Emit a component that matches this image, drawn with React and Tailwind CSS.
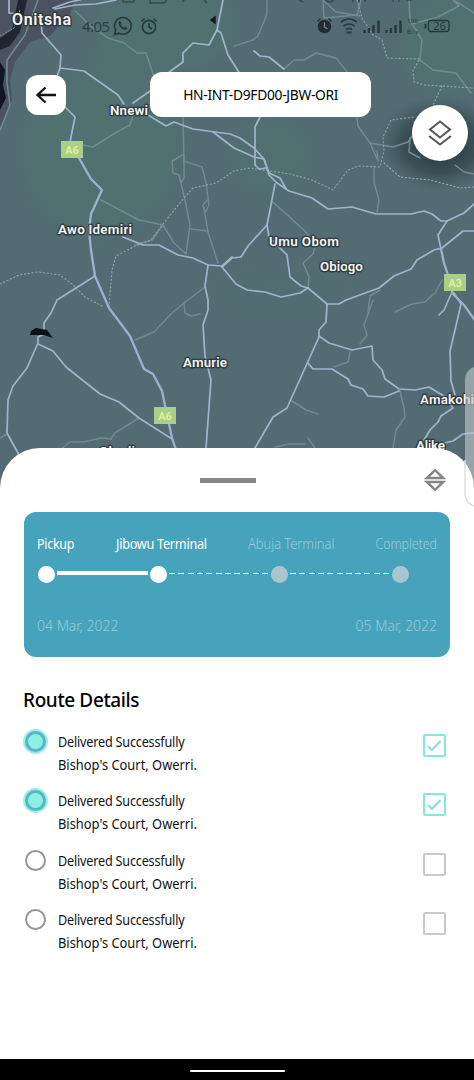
import React from "react";

const majorRoads = [
  "9,0 9,13 20,14",
  "41,20 42,33 61,55 60,68 57,76",
  "65,107 75,117 70,142",
  "55,9 75,5 96,4 116,0",
  "53,8 70,2 88,-2",
  "60,68 84,71 118,95 124,104",
  "223,0 217,30 209,45 193,43 183,53 183,62 168,73 150,91 133,103",
  "217,30 221,33 228,55 240,74",
  "148,115 166,126 174,122 193,129 230,134 240,138 254,148 264,159",
  "213,132 234,148 254,157 264,159 269,175 277,183 289,191 312,198 328,209 352,207 376,214 411,214 424,211 432,214 441,221 447,221 464,213 474,204",
  "260,117 255,127 255,165 259,169 266,168",
  "264,159 269,173 280,178 286,189",
  "254,51 260,56 269,57 284,69",
  "275,184 267,225 248,246 241,257 232,258 222,267",
  "267,225 269,237 287,255 290,277 301,286 308,288 327,304 339,304 346,300 379,288 394,276 411,269 417,260 434,250 442,248 463,231 474,231",
  "308,288 300,293 281,297 265,292 247,290 236,284 222,267",
  "123,237 143,245 159,245 178,255 193,258 208,265 222,266 232,257",
  "208,265 205,286 208,300 208,310 203,325 205,356 211,380 206,448",
  "327,304 326,322 319,330 319,337 287,408 273,417 255,448",
  "319,336 329,343 352,350 372,346 373,360 382,370 385,379 399,389 415,390 429,387 444,396 453,408 441,416 438,422 430,430 424,440",
  "308,363 313,369 332,369 348,379 351,385 363,389 368,396 384,397 399,391",
  "447,221 438,235 441,249",
  "452,292 444,310 439,315",
  "454,293 461,304 455,330 450,351 451,381 455,395",
  "95,276 57,300 51,313 44,323 44,334 38,337 38,343 27,368 13,386 8,400 7,433 19,455",
  "38,344 53,351 66,367 100,394 119,402 139,418 172,439",
  "474,433 463,434 453,441 440,444",
];

const trunkRoads = [
  "79,158 91,179 102,190 91,214 89,230 91,250 95,276 109,308 130,336 144,369 153,374 162,391 166,410 172,438 176,450",
  "441,249 444,263 448,275 453,294 464,305 474,319",
];

const minorRoads = [
  "75,11 92,27 108,38 124,43 137,53 146,53 154,77",
  "38,0 25,35 7,60 7,83 10,105 0,130",
  "133,115 130,125 115,133 93,147 74,143",
  "183,117 184,163",
  "172,161 184,154 184,178 181,183 179,175 173,173 172,161",
  "179,175 185,200 190,225 186,254 174,243 163,225 139,220 101,200",
  "184,161 202,167 206,183 209,205 205,213 203,205 207,200",
  "204,208 208,232 218,263",
  "190,229 208,231",
  "163,225 152,240 135,245",
  "205,287 184,303 171,314 154,332 135,340",
  "184,303 185,313 191,316 200,314",
  "267,0 267,14 258,36 253,40 234,46",
  "323,0 324,18 357,15 361,0",
  "323,0 336,12 360,16",
  "409,0 410,20 422,40 420,60 433,70 456,73 471,93",
  "474,13 462,5 453,0 459,6 438,17 412,24",
  "284,69 294,60 304,60 316,53 336,58 348,73",
  "357,117 358,126 370,143 378,161 377,151",
  "374,166 374,182 379,200 377,212",
  "370,143 393,147 408,142 412,136",
  "273,202 306,232 315,247 313,254 303,263 309,277 308,288",
  "373,300 364,325 367,335 360,344",
  "350,352 348,362 334,367",
  "368,312 370,296 380,290",
  "395,312 412,304 425,302 435,293 442,280",
  "292,401 306,410 318,414",
  "400,391 404,408 405,417 396,430 393,448",
  "139,418 115,433 111,439",
  "111,439 101,438 84,442 70,442 60,450",
  "0,438 7,434",
  "275,447 289,444 305,444",
  "315,448 308,438",
  "410,138 409,152 420,158",
  "474,174 464,172 455,165",
];

const dottedRoads = [
  "0,284 19,275 38,272 60,275 72,284 85,297 102,306",
  "109,307 112,270 116,256 135,246 151,240 163,224 184,198 193,188 216,183 234,171 250,168 290,174 312,180 333,190 348,170 358,166 380,167 384,150 383,137 391,120 414,117",
  "384,163 400,177 430,180 460,188 474,187",
  "357,0 362,18 372,34 382,40 387,58 420,59 413,70 414,82 425,85 474,88",
  "442,86 433,105",
];

const places = [
  { name: "Onitsha", x: 12, y: 25, w: 59, size: 16 },
  { name: "Nnewi", x: 110, y: 115, w: 38, size: 13.5 },
  { name: "Awo Idemiri", x: 58, y: 234, w: 74, size: 13.5 },
  { name: "Umu Obom", x: 269, y: 246, w: 70, size: 13.5 },
  { name: "Obiogo", x: 320, y: 271, w: 43, size: 13.5 },
  { name: "Amurie", x: 183, y: 367, w: 44, size: 13.5 },
  { name: "Amakohi", x: 420, y: 404, w: 54, size: 13.5 },
  { name: "Alike", x: 416, y: 450, w: 29, size: 13.5 },
  { name: "Obodi", x: 99, y: 456, w: 36, size: 13.5 },
];

const shields = [
  { label: "A6", x: 61, y: 141 },
  { label: "A6", x: 154, y: 407 },
  { label: "A3", x: 444, y: 274 },
];

function Lines({ items, ...props }) {
  return (
    <g fill="none" strokeLinejoin="round" strokeLinecap="round" {...props}>
      {items.map((points, i) => (
        <polyline key={i} points={points} />
      ))}
    </g>
  );
}

function MapView() {
  return (
    <svg className="absolute inset-0" width="474" height="520" viewBox="0 0 474 520">
      <defs>
        <radialGradient id="green">
          <stop offset="0" stopColor="#4f756f" stopOpacity="0.75" />
          <stop offset="0.6" stopColor="#4f756f" stopOpacity="0.5" />
          <stop offset="1" stopColor="#4f756f" stopOpacity="0" />
        </radialGradient>
        <radialGradient id="shade">
          <stop offset="0" stopColor="#1f3238" stopOpacity="0.95" />
          <stop offset="0.6" stopColor="#2c4046" stopOpacity="0.65" />
          <stop offset="1" stopColor="#3d5358" stopOpacity="0" />
        </radialGradient>
      </defs>
      <rect width="474" height="520" fill="#536b73" />
      <ellipse cx="100" cy="150" rx="100" ry="110" fill="url(#green)" />
      <ellipse cx="165" cy="25" rx="90" ry="60" fill="url(#green)" />
      <ellipse cx="445" cy="45" rx="60" ry="60" fill="url(#green)" />
      <ellipse cx="270" cy="155" rx="60" ry="60" fill="url(#green)" opacity="0.6" />
      <ellipse cx="280" cy="290" rx="110" ry="40" fill="url(#green)" opacity="0.35" />
      <path d="M0 0H75L70 14L50 36L30 42L15 62L10 80L12 100L0 128Z" fill="#4b5260" />
      <path d="M18 0H27L20 32L10 46L0 50V38L12 30Z" fill="#202631" />
      <path d="M0 62L5 70L3 85L6 98L0 110Z" fill="#101722" />
      <path d="M0 36L14 28L20 10" fill="none" stroke="#8e98a6" strokeWidth="1" strokeDasharray="2 1" />
      <ellipse cx="440" cy="144" rx="62" ry="48" fill="url(#shade)" />
      <Lines items={minorRoads} stroke="#728b92" strokeWidth="1.5" />
      <Lines items={dottedRoads} stroke="#8ca2a3" strokeWidth="1.2" strokeDasharray="1.2 2.6" />
      <Lines items={majorRoads} stroke="#a2b4cc" strokeWidth="1.7" />
      <Lines items={trunkRoads} stroke="#a0afd2" strokeWidth="2.3" />
      <path d="M31 331L36 328L47 330L53 338L44 335L30 335Z" fill="#0c1114" />
      <path d="M211 20L215 17V23Z" fill="#15191c" stroke="#15191c" strokeWidth="1.5" />
      {shields.map((s) => (
        <g key={s.y}>
          <rect x={s.x} y={s.y} width="22" height="17" fill="#a9cf88" />
          <text x={s.x + 11} y={s.y + 13} textAnchor="middle" fontSize="11" fontWeight="700" fill="#e0ee9a" fontFamily="Roboto, sans-serif">
            {s.label}
          </text>
        </g>
      ))}
      <g fontFamily="Roboto, sans-serif" fontWeight="600" fill="#f4f6f6" stroke="#283238" strokeWidth="3" strokeOpacity="0.75" strokeLinejoin="round" paintOrder="stroke">
        {places.map((p) => (
          <text key={p.name} x={p.x} y={p.y} fontSize={p.size} textLength={p.w}>
            {p.name}
          </text>
        ))}
      </g>
    </svg>
  );
}

function StatusBar() {
  return (
    <svg className="absolute inset-x-0 top-0" width="474" height="44" viewBox="0 0 474 44" fill="none" stroke="#26383e" strokeWidth="1.6">
      <g stroke="#2a3a40" strokeOpacity="0.7">
        <path d="M123 0v2h11v-2M150 0v3h14l3-3M182 2l4-4M204 0l3 3M299 0l4 2M325 0q5 4 9 0M353 0v2M359 0v2M365 0v2M393 0v2M399 0v2M407 0h5" />
      </g>
      <text x="82" y="32" textLength="28" fontSize="15" fontWeight="400" fill="#2b3e45" stroke="none" fontFamily="'Noto Sans', sans-serif">4:05</text>
      <path d="M114.500 34.500l1.300-4.300a8.300 8.300 0 1 1 3.200 3z" />
      <path d="M119 21.500c1-1 2 0 2.300 1.600l-.8 1.300c.8 1.600 2 2.600 3.600 3.300l1.300-1c1.500.5 2.600 1.300 1.500 2.400-3.400 3-10-4-7.900-7.600z" fill="#26383e" stroke="none" />
      <circle cx="149" cy="27" r="6.600" />
      <path d="M149 23v4l3 2M141.500 21.500l3-3M156.500 21.500l-3-3" />
      <circle cx="324.500" cy="26.500" r="6.800" fill="#202e34" stroke="none" />
      <path d="M317.500 21.500l3-3M331.500 21.500l-3-3" />
      <path d="M324.500 22.500v4.500l3 2" stroke="#788d92" strokeWidth="1.200" />
      <path d="M341 22q8-6 16 0M343.500 26q5.500-4 11 0M346 29.500q3-2 6 0" />
      <path d="M346.500 32.500h5" strokeWidth="2" />
      <path d="M364.500 33v-3M369 33v-5M373.500 33v-8M378.500 33V20.500M386.500 33v-3M391 33v-5M395.500 33v-8M400.500 33V20.500" strokeWidth="2.400" />
      <text x="407" y="23" textLength="11" fontSize="6" fill="#26383e" stroke="none" fontFamily="'Noto Sans', sans-serif">100</text>
      <text x="407" y="34" textLength="11" fontSize="6" fill="#26383e" stroke="none" fontFamily="'Noto Sans', sans-serif">B/s</text>
      <path d="M425.500 24v4.500" strokeWidth="1.800" />
      <rect x="428.500" y="20.500" width="20.500" height="11" rx="2.500" strokeWidth="1.300" />
      <text x="433" y="30" textLength="13" lengthAdjust="spacingAndGlyphs" fontSize="10" fill="#26383e" stroke="none" fontFamily="'Noto Sans', sans-serif">26</text>
    </svg>
  );
}

function Stop({ state }) {
  return <span className={`size-[17px] shrink-0 rounded-full ${state === "done" ? "bg-white" : "bg-[#a9c6cc]"}`} />;
}

function TripCard() {
  return (
    <section className="mx-6 mt-[22px] h-[145px] w-[426px] rounded-xl bg-[#46a3bb] px-[13px] pt-[22px] text-[14px] leading-5 text-[#9acbd7]">
      <div className="flex justify-between whitespace-nowrap">
        <span className="w-[79px] text-white"><span className="inline-block origin-left scale-x-[0.89] tracking-[-0.3px]">Pickup</span></span>
        <span className="w-[132px] text-white"><span className="inline-block origin-left scale-x-[0.905] tracking-[-0.3px]">Jibowu Terminal</span></span>
        <span className="w-[128px]"><span className="inline-block origin-left scale-x-[0.93] font-light tracking-[-0.1px]">Abuja Terminal</span></span>
        <span className="flex w-[61px] justify-end"><span className="inline-block origin-right scale-x-[0.89] font-light tracking-[-0.1px]">Completed</span></span>
      </div>
      <div className="mt-[12px] flex items-center pl-[1px]">
        <Stop state="done" />
        <span className="mx-[2px] mb-[3px] h-1 w-[91px] bg-white" />
        <Stop state="done" />
        <span className="mx-[2px] mb-[3px] h-px w-[100px] bg-[repeating-linear-gradient(90deg,#fff_0px,#fff_6px,transparent_6px,transparent_9.300px)]" />
        <Stop />
        <span className="mx-[2px] mb-[3px] h-px w-[100px] bg-[repeating-linear-gradient(90deg,#fff_0px,#fff_6px,transparent_6px,transparent_9.300px)]" />
        <Stop />
      </div>
      <div className="mt-[33px] flex justify-between font-light">
        <span>04 Mar, 2022</span>
        <span>05 Mar, 2022</span>
      </div>
    </section>
  );
}

function RouteItem({ done }) {
  return (
    <li className="flex h-[59.300px]">
      <span
        className={
          done
            ? "mt-px size-[21px] rounded-full border-[3px] border-[#55b8c4] bg-[#8eefe5] shadow-[0_0_1px_2px_#9cebe8]"
            : "mt-px size-[21px] rounded-full border-2 border-[#969696]"
        }
      />
      <div className="ml-[11.500px] whitespace-nowrap text-[14px] leading-[23px] text-[#111]">
        <p className="origin-left scale-x-[0.9] tracking-[-0.2px]">Delivered Successfully</p>
        <p className="origin-left scale-x-[0.92]">Bishop's Court, Owerri.</p>
      </div>
      <span className={`ml-auto mt-1 flex size-[23px] items-center justify-center rounded-[2px] border-2 ${done ? "border-[#83e8de]" : "border-[#c9c9c9]"}`}>
        {done && (
          <svg width="15" height="13" viewBox="0 0 15 13" fill="none" stroke="#88ddd5" strokeWidth="2">
            <path d="M1 7l4 4L13.500 2" />
          </svg>
        )}
      </span>
    </li>
  );
}

export default function App() {
  return (
    <main className="relative flex h-[1080px] w-[474px] flex-col overflow-hidden bg-white font-['Noto_Sans',sans-serif] text-black">
      <MapView />
      <StatusBar />
      <header className="relative flex h-[448px] shrink-0 items-start pl-[26px] pt-[72px]">
        <button className="mt-[3px] flex size-10 items-center justify-center rounded-xl bg-white">
          <svg width="22" height="20" viewBox="0 0 22 20" fill="none" stroke="#111" strokeWidth="2.300">
            <path d="M21 10H2.500M10.500 2.500L2.500 10l8 7.500" />
          </svg>
        </button>
        <div className="ml-[84px] flex h-[45px] w-[221px] items-center justify-center whitespace-nowrap rounded-xl bg-white text-[14px]">
          <span className="scale-x-[0.985] tracking-[-0.3px]">HN-INT-D9FD00-JBW-ORI</span>
        </div>
        <button className="ml-[41px] mt-[33px] flex size-14 shrink-0 items-center justify-center rounded-full bg-white">
          <svg width="26" height="26" viewBox="0 0 26 26" fill="none" stroke="#555" strokeWidth="2">
            <path d="M13 1.500L23 9.500L13 17.500L3 9.500ZM2 16l11 8.500L24 16" />
          </svg>
        </button>
      </header>
      <div className="absolute left-[465px] top-[366px] h-[140px] w-[30px] rounded-[14px] bg-[#c4cccb]/60" />
      <div className="relative flex h-[611px] shrink-0 flex-col rounded-t-[40px] bg-white">
        <svg className="absolute right-0 top-[12px]" width="12" height="48" viewBox="0 0 12 48" fill="none" stroke="#ddd" strokeWidth="1.500">
          <path d="M3 0V33Q3 43 12 46" />
        </svg>
        <div className="flex h-[42px] shrink-0 items-end pl-[200px]">
          <span className="mb-[7px] h-[5px] w-[56px] bg-[#868686]" />
          <svg className="-mb-[2px] ml-[168px]" width="22" height="24" viewBox="0 0 22 24" fill="none" stroke="#858585" strokeWidth="2.500">
            <path d="M3 9.900L11 2.200l8 7.700ZM3 14.100L11 21.800l8-7.700Z" />
          </svg>
        </div>
        <TripCard />
        <h1 className="ml-[23px] mt-[29px] origin-left scale-x-[0.95] self-start text-[20px] font-medium leading-[28px] tracking-[-0.4px]">Route Details</h1>
        <ul className="ml-[25px] mr-7 mt-[16px]">
          <RouteItem done />
          <RouteItem done />
          <RouteItem />
          <RouteItem />
        </ul>
      </div>
      <footer className="relative flex h-[21px] shrink-0 items-center justify-center bg-black">
        <span className="mt-[3px] h-[2px] w-[95px] rounded-full bg-white" />
      </footer>
    </main>
  );
}
